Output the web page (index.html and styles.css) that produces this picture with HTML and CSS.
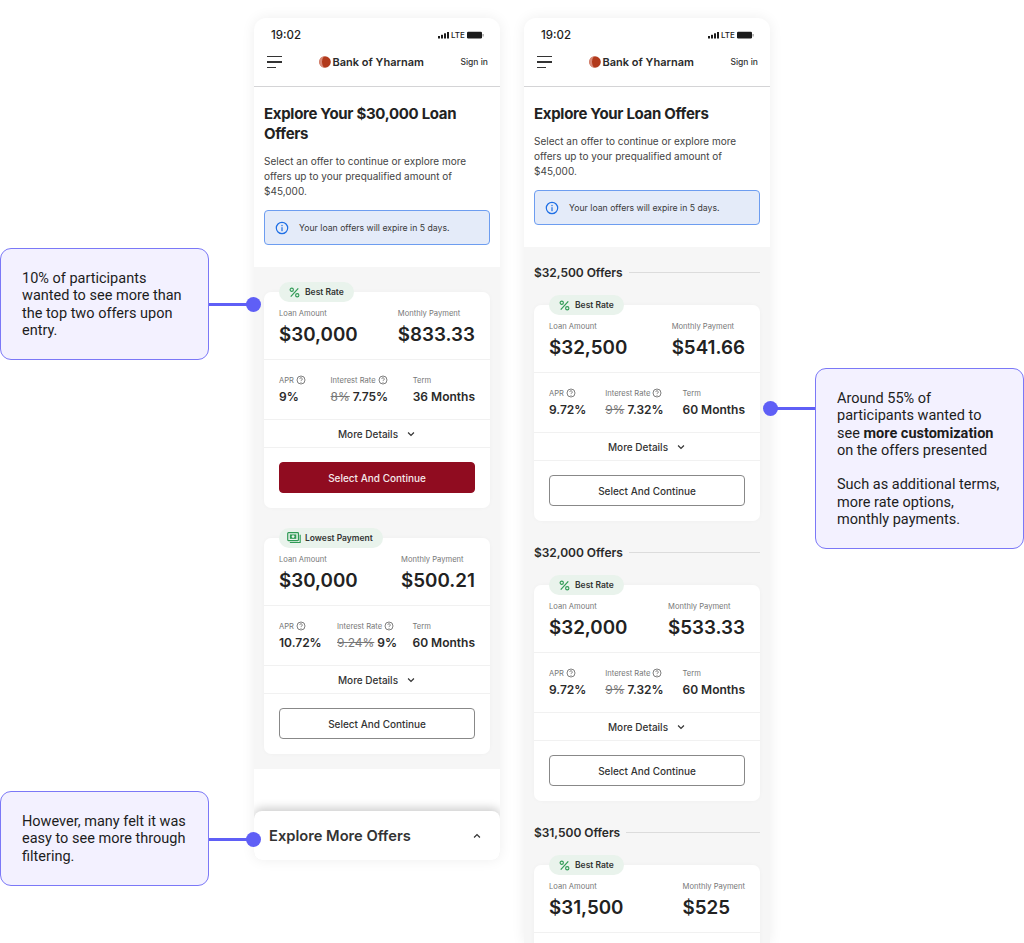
FILE: index.html
```html
<!DOCTYPE html>
<html lang="en">
<head>
<meta charset="utf-8">
<title>Bank of Yharnam loan offers</title>
<link rel="stylesheet" href="styles.css">
</head>
<body>
<svg class="defs" width="0" height="0" aria-hidden="true">
  <symbol id="i-help" viewBox="0 0 12 12"><circle cx="6" cy="6" r="4.8" fill="none" stroke="currentColor" stroke-width="1"/><path d="M4.5 4.8a1.5 1.5 0 1 1 2.3 1.3c-.5.3-.8.6-.8 1.1" fill="none" stroke="currentColor" stroke-width="1"/><circle cx="6" cy="8.6" r=".6" fill="currentColor"/></symbol>
  <symbol id="i-down" viewBox="0 0 12 12"><path d="M2.5 4.2 6 7.7l3.5-3.5" fill="none" stroke="currentColor" stroke-width="1.5"/></symbol>
  <symbol id="i-percent" viewBox="0 0 14 14"><path d="M11.8 1.8 2.2 12.2" fill="none" stroke="currentColor" stroke-width="1.5"/><circle cx="3.5" cy="3.5" r="2.1" fill="none" stroke="currentColor" stroke-width="1.4"/><circle cx="10.5" cy="10.5" r="2.1" fill="none" stroke="currentColor" stroke-width="1.4"/></symbol>
  <symbol id="i-cash" viewBox="0 0 15 13"><rect x=".7" y=".7" width="11.6" height="8.6" rx=".8" fill="none" stroke="currentColor" stroke-width="1.3"/><rect x="3" y="2.6" width="7" height="4.8" fill="currentColor"/><circle cx="6.5" cy="5" r="1.5" fill="#e9f3ec"/><path d="M14.2 3v8.3H3" fill="none" stroke="currentColor" stroke-width="1.2"/></symbol>
  <symbol id="i-info" viewBox="0 0 14 14"><circle cx="7" cy="7" r="5.7" fill="none" stroke="currentColor" stroke-width="1.2"/><rect x="6.4" y="6.2" width="1.2" height="4" fill="currentColor"/><rect x="6.4" y="3.9" width="1.2" height="1.3" fill="currentColor"/></symbol>
  <symbol id="i-status" viewBox="0 0 46 8"><rect x="0" y="5" width="2" height="2.5" fill="currentColor"/><rect x="3" y="3.8" width="2" height="3.7" fill="currentColor"/><rect x="6" y="2.3" width="2" height="5.2" fill="currentColor"/><rect x="9" y="1" width="2" height="6.5" fill="currentColor"/><rect x="29" y=".8" width="15" height="6.6" rx="1.2" fill="currentColor"/><rect x="44.5" y="3" width="1.2" height="2.5" fill="#999"/></symbol>
  <symbol id="i-logo" viewBox="0 0 12 12"><circle cx="6" cy="6" r="5.8" fill="#b23a1c"/><path d="M5 .3A5.8 5.8 0 0 0 5 11.7 9 9 0 0 1 5 .3Z" fill="#d98a78"/></symbol>
</svg>

<div class="callout callout-a"><p>10% of participants wanted to see more than the top two offers upon entry.</p></div>
<div class="connector connector-a"></div>
<div class="callout callout-b"><p>However, many felt it was easy to see more through filtering.</p></div>
<div class="connector connector-b"></div>

<section class="phone phone-left">
  <div class="status"><span class="time">19:02</span><span class="signal"><svg class="status-icon"><use href="#i-status"/></svg><span class="lte">LTE</span></span></div>
  <header class="nav">
    <div class="burger"><i class="bar-1"></i><i class="bar-2"></i><i class="bar-3"></i></div>
    <div class="brand"><svg class="logo"><use href="#i-logo"/></svg>Bank of Yharnam</div>
    <a class="signin">Sign in</a>
  </header>
  <div class="intro">
    <h1>Explore Your $30,000 Loan Offers</h1>
    <p class="lead">Select an offer to continue or explore more offers up to your prequalified amount of $45,000.</p>
    <div class="alert"><svg class="info"><use href="#i-info"/></svg>Your loan offers will expire in 5 days.</div>
  </div>
  <div class="offers offers-left">
    <article class="card">
      <div class="badge"><svg class="b-icon"><use href="#i-percent"/></svg>Best Rate</div>
      <div class="row-main"><div><div class="lbl">Loan Amount</div><div class="big">$30,000</div></div><div><div class="lbl">Monthly Payment</div><div class="big">$833.33</div></div></div>
      <div class="row-stats"><div><div class="lbl">APR <svg class="help"><use href="#i-help"/></svg></div><div class="val">9%</div></div><div><div class="lbl">Interest Rate <svg class="help"><use href="#i-help"/></svg></div><div class="val"><s>8%</s> 7.75%</div></div><div><div class="lbl">Term</div><div class="val">36 Months</div></div></div>
      <div class="more">More Details <svg class="chev"><use href="#i-down"/></svg></div>
      <div class="action"><button class="btn btn-primary">Select And Continue</button></div>
    </article>
    <article class="card">
      <div class="badge"><svg class="b-icon b-cash"><use href="#i-cash"/></svg>Lowest Payment</div>
      <div class="row-main"><div><div class="lbl">Loan Amount</div><div class="big">$30,000</div></div><div><div class="lbl">Monthly Payment</div><div class="big">$500.21</div></div></div>
      <div class="row-stats"><div><div class="lbl">APR <svg class="help"><use href="#i-help"/></svg></div><div class="val">10.72%</div></div><div><div class="lbl">Interest Rate <svg class="help"><use href="#i-help"/></svg></div><div class="val"><s>9.24%</s> 9%</div></div><div><div class="lbl">Term</div><div class="val">60 Months</div></div></div>
      <div class="more">More Details <svg class="chev"><use href="#i-down"/></svg></div>
      <div class="action"><button class="btn">Select And Continue</button></div>
    </article>
  </div>
  <div class="spacer"></div>
  <footer class="sheet"><span>Explore More Offers</span><svg class="chev chev-up"><use href="#i-down"/></svg></footer>
</section>

<section class="phone phone-right">
  <div class="status"><span class="time">19:02</span><span class="signal"><svg class="status-icon"><use href="#i-status"/></svg><span class="lte">LTE</span></span></div>
  <header class="nav">
    <div class="burger"><i class="bar-1"></i><i class="bar-2"></i><i class="bar-3"></i></div>
    <div class="brand"><svg class="logo"><use href="#i-logo"/></svg>Bank of Yharnam</div>
    <a class="signin">Sign in</a>
  </header>
  <div class="intro">
    <h1>Explore Your Loan Offers</h1>
    <p class="lead">Select an offer to continue or explore more offers up to your prequalified amount of $45,000.</p>
    <div class="alert"><svg class="info"><use href="#i-info"/></svg>Your loan offers will expire in 5 days.</div>
  </div>
  <div class="offers">
    <h2 class="group"><span>$32,500 Offers</span></h2>
    <article class="card">
      <div class="badge"><svg class="b-icon"><use href="#i-percent"/></svg>Best Rate</div>
      <div class="row-main"><div><div class="lbl">Loan Amount</div><div class="big">$32,500</div></div><div><div class="lbl">Monthly Payment</div><div class="big">$541.66</div></div></div>
      <div class="row-stats"><div><div class="lbl">APR <svg class="help"><use href="#i-help"/></svg></div><div class="val">9.72%</div></div><div><div class="lbl">Interest Rate <svg class="help"><use href="#i-help"/></svg></div><div class="val"><s>9%</s> 7.32%</div></div><div><div class="lbl">Term</div><div class="val">60 Months</div></div></div>
      <div class="more">More Details <svg class="chev"><use href="#i-down"/></svg></div>
      <div class="action"><button class="btn">Select And Continue</button></div>
    </article>
    <h2 class="group"><span>$32,000 Offers</span></h2>
    <article class="card">
      <div class="badge"><svg class="b-icon"><use href="#i-percent"/></svg>Best Rate</div>
      <div class="row-main"><div><div class="lbl">Loan Amount</div><div class="big">$32,000</div></div><div><div class="lbl">Monthly Payment</div><div class="big">$533.33</div></div></div>
      <div class="row-stats"><div><div class="lbl">APR <svg class="help"><use href="#i-help"/></svg></div><div class="val">9.72%</div></div><div><div class="lbl">Interest Rate <svg class="help"><use href="#i-help"/></svg></div><div class="val"><s>9%</s> 7.32%</div></div><div><div class="lbl">Term</div><div class="val">60 Months</div></div></div>
      <div class="more">More Details <svg class="chev"><use href="#i-down"/></svg></div>
      <div class="action"><button class="btn">Select And Continue</button></div>
    </article>
    <h2 class="group"><span>$31,500 Offers</span></h2>
    <article class="card card-cut">
      <div class="badge"><svg class="b-icon"><use href="#i-percent"/></svg>Best Rate</div>
      <div class="row-main"><div><div class="lbl">Loan Amount</div><div class="big">$31,500</div></div><div><div class="lbl">Monthly Payment</div><div class="big">$525</div></div></div>
    </article>
  </div>
</section>

<div class="connector connector-c"></div>
<div class="callout callout-c"><p>Around 55% of participants wanted to see <b>more customization</b> on the offers presented</p><p class="gap">Such as additional terms, more rate options, monthly payments.</p></div>
</body>
</html>
```
FILE: styles.css
```css
* { box-sizing: border-box; }
html, body { margin: 0; height: 943px; overflow: hidden; background: #fff; }
body { position: relative; width: 1024px; font-family: "Inter", "Noto Sans", sans-serif; color: #222; }
.defs { position: absolute; }

.phone { position: absolute; top: 18px; display: flex; flex-direction: column; background: #fff; border-radius: 12px 12px 0 0; box-shadow: 0 0 14px rgba(0,0,0,.07); overflow: hidden; }
.phone-left { left: 254px; width: 246px; height: 842px; border-radius: 12px 12px 8px 8px; }
.phone-right { left: 524px; width: 246px; height: 925px; }

.status { height: 32px; flex: none; display: flex; align-items: center; justify-content: space-between; padding: 2px 16px 0 17px; }
.time { font-size: 11.5px; font-weight: 500; color: #1c1c1c; }
.signal { position: relative; display: block; width: 46px; height: 8px; color: #1c1c1c; }
.status-icon { display: block; width: 46px; height: 8px; }
.lte { position: absolute; left: 13px; top: -1px; font-size: 8px; line-height: 10px; font-weight: 500; }

.nav { height: 37px; flex: none; display: flex; align-items: center; justify-content: space-between; padding: 0 12px 12px 13px; border-bottom: 1px solid #d4d4d6; }
.burger { width: 15px; display: flex; flex-direction: column; gap: 4px; }
.burger i { display: block; height: 1.5px; background: #333; }
.bar-2 { width: 15px; }
.bar-3 { width: 9px; }
.brand { display: flex; align-items: center; gap: 2px; font-size: 11px; font-weight: 600; color: #2a2a2a; }
.logo { width: 12px; height: 12px; }
.signin { font-size: 8.5px; font-weight: 500; color: #333; }

.intro { flex: none; padding: 17px 10px 22px; }
h1 { margin: 0; font-size: 15px; line-height: 20px; font-weight: 700; letter-spacing: -.3px; color: #222; }
.lead { margin: 10px 0 11px; font-size: 10px; line-height: 15px; color: #444; }
.alert { height: 35px; display: flex; align-items: center; gap: 10px; padding-left: 10px; background: #e4ebf9; border: 1px solid #6d9df0; border-radius: 4px; font-size: 8.7px; color: #3a3a3a; }
.info { width: 14px; height: 14px; color: #1f6fe5; flex: none; }

.offers { flex: 1; min-height: 0; padding: 17px 10px 0; background: #f6f6f6; }
.offers-left { flex: none; padding: 25px 10px 15px; display: flex; flex-direction: column; gap: 30px; }
.spacer { flex: none; height: 42px; }

.group { margin: 23px 0 25px; display: flex; align-items: center; gap: 6px; height: 16px; font-size: 12px; font-weight: 600; letter-spacing: -.05px; color: #2a2a2a; }
.group:first-child { margin-top: 0; }
.group::after { content: ""; flex: 1; height: 1px; background: #dcdcdc; }

.card { position: relative; background: #fff; border-radius: 7px; box-shadow: 0 0 4px rgba(0,0,0,.03); }
.card-cut { height: 216px; }
.badge { position: absolute; left: 15px; top: -10px; height: 20px; display: flex; align-items: center; gap: 5px; padding: 0 10px; border-radius: 10px; background: #e9f3ec; font-size: 8.5px; font-weight: 600; color: #333; }
.b-icon { width: 11px; height: 11px; color: #2f9a55; }
.b-cash { width: 14px; height: 12px; margin-left: -2px; margin-right: -1px; }

.row-main { display: flex; justify-content: space-between; padding: 15px 15px 11px; border-bottom: 1px solid #f1f1f1; }
.lbl { display: flex; align-items: center; gap: 2px; height: 12px; font-size: 7.6px; color: #777; white-space: nowrap; }
.big { margin-top: 3px; font-size: 18.8px; line-height: 26px; font-weight: 600; color: #222; }
.row-stats { display: flex; justify-content: space-between; padding: 14px 15px 13px; border-bottom: 1px solid #f1f1f1; }
.val { margin-top: 2px; font-size: 12px; line-height: 18px; font-weight: 600; color: #2a2a2a; white-space: nowrap; }
.val s { font-weight: 400; color: #777; }
.help { width: 10px; height: 10px; color: #666; }
.more { height: 28px; display: flex; align-items: center; justify-content: center; gap: 8px; border-bottom: 1px solid #f1f1f1; font-size: 10px; font-weight: 500; color: #333; }
.chev { width: 10px; height: 10px; color: #333; }
.action { padding: 14px 15px 15px; }
.btn { display: block; width: 100%; height: 31px; padding: 0; background: #fff; border: 1px solid #888; border-radius: 4px; font: 500 10px "Inter", "Noto Sans", sans-serif; color: #333; }
.btn-primary { background: #900c20; border-color: #900c20; color: #f5e8ea; }

.sheet { flex: 1; display: flex; align-items: center; justify-content: space-between; padding: 0 18px 0 15px; background: #fff; border-radius: 8px; box-shadow: 0 -3px 10px rgba(0,0,0,.2); font-size: 14.7px; font-weight: 600; color: #333; }
.chev-up { transform: rotate(180deg); }

.callout { position: absolute; width: 209px; padding: 21px 20px 0 21px; background: #f3f1ff; border: 1px solid #7b78f7; border-radius: 11px; font-family: "Roboto", "Liberation Sans", sans-serif; font-size: 14.5px; line-height: 17.3px; color: #1d1d1d; }
.callout p { margin: 0; }
.callout .gap { margin-top: 17.3px; }
.callout-a { left: 0; top: 248px; height: 112px; }
.callout-b { left: 0; top: 791px; height: 95px; }
.callout-c { left: 815px; top: 368px; height: 181px; }

.connector { position: absolute; height: 3px; background: #5f5ff6; z-index: 2; }
.connector::after { content: ""; position: absolute; top: -6px; width: 15px; height: 15px; border-radius: 50%; background: #5f5ff6; }
.connector-a { left: 209px; top: 303px; width: 45px; }
.connector-a::after { right: -7px; }
.connector-b { left: 209px; top: 838px; width: 45px; }
.connector-b::after { right: -7px; }
.connector-c { left: 770px; top: 407px; width: 45px; }
.connector-c::after { left: -7px; }
```
